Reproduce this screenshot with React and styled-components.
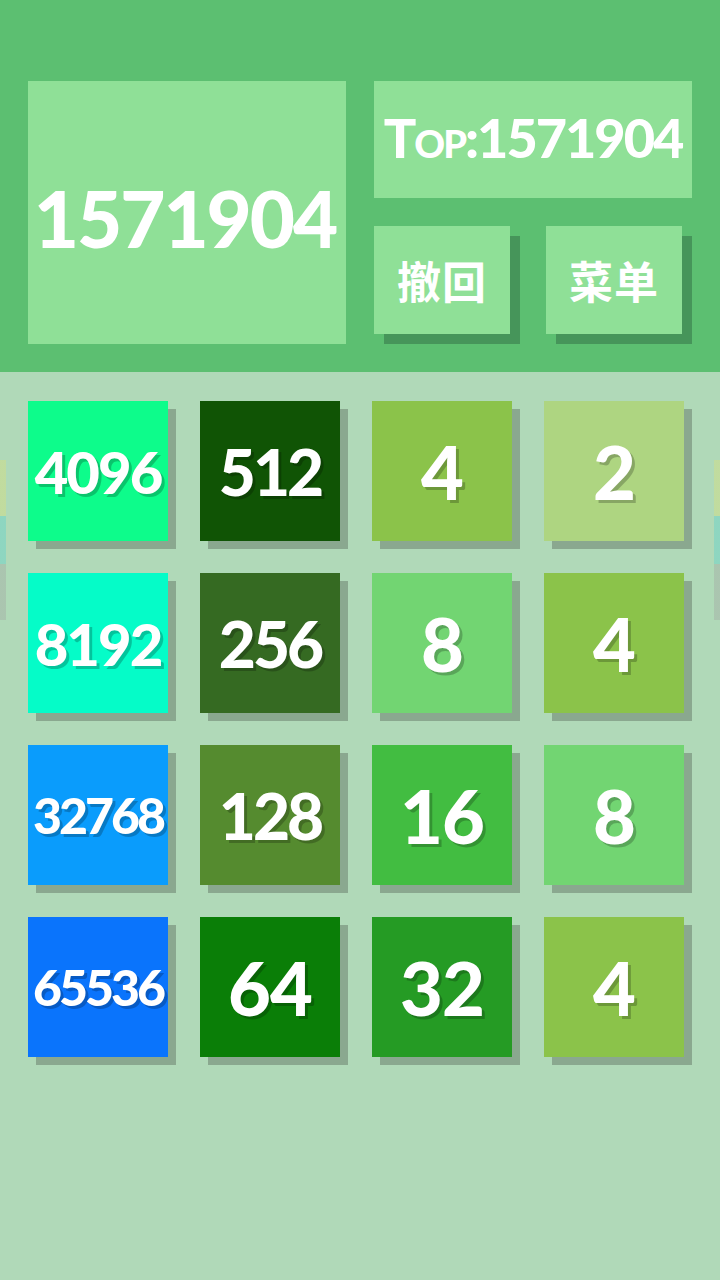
import React from 'react';
import styled, { createGlobalStyle } from 'styled-components';

const GlobalStyle = createGlobalStyle`
  html, body {
    margin: 0;
    padding: 0;
    background: #b0d9b8;
  }
  * {
    box-sizing: border-box;
  }
`;

const Page = styled.div`
  position: relative;
  width: 720px;
  min-height: 1280px;
  background: #b0d9b8;
  font-family: 'Lato', 'Noto Sans CJK SC', sans-serif;
  overflow: hidden;
`;

const Header = styled.div`
  display: flex;
  gap: 28px;
  height: 372px;
  padding: 81px 28px 28px;
  background: #5cbf71;
`;

const ScoreBox = styled.div`
  width: 318px;
  height: 263px;
  display: flex;
  align-items: center;
  justify-content: center;
  background: #8fe097;
  color: #fff;
  font-size: 78px;
  font-weight: 900;
  letter-spacing: -2px;
  padding-top: 10px;
  padding-right: 4px;
`;

const SideCol = styled.div`
  width: 318px;
  display: flex;
  flex-direction: column;
  gap: 28px;
`;

const TopBox = styled.div`
  height: 117px;
  display: flex;
  align-items: center;
  justify-content: center;
  background: #8fe097;
  color: #fff;
  font-size: 54px;
  font-weight: 900;
  font-variant: small-caps;
  letter-spacing: -2px;
  padding-bottom: 4px;
`;

const ButtonRow = styled.div`
  display: flex;
  gap: 36px;
`;

const MenuButton = styled.button`
  width: 136px;
  height: 108px;
  border: none;
  padding: 0;
  background: #8fe097;
  box-shadow: 10px 10px 0 #46955a;
  color: #fff;
  font-family: 'Noto Sans CJK SC', sans-serif;
  font-size: 44px;
  font-weight: 700;
  letter-spacing: 1px;
`;

const Board = styled.div`
  display: grid;
  grid-template-columns: repeat(4, 140px);
  grid-auto-rows: 140px;
  gap: 32px;
  padding: 29px 28px;
`;

const Tile = styled.div`
  display: flex;
  align-items: center;
  justify-content: center;
  background: ${(p) => p.$bg};
  box-shadow: 8px 8px 0 #8aa88f;
  color: #fff;
  font-size: ${(p) => p.$size}px;
  font-weight: 900;
  letter-spacing: ${(p) => p.$spacing}px;
  text-shadow: 3px 3px 0 rgba(0, 0, 0, 0.22);
`;

const EdgeStrip = styled.div`
  position: absolute;
  top: 460px;
  ${(p) => (p.$side === 'left' ? 'left: 0;' : 'right: 0;')}
  width: 6px;
  height: 160px;
  opacity: 0.35;
  background: linear-gradient(
    to bottom,
    #e0e070 0 35%,
    #4fd0d0 35% 65%,
    #a0a0a0 65% 100%
  );
`;

const tiles = [
  [4096, '#0dfc8b'], [512, '#105405'], [4, '#8bc34a'], [2, '#aed581'],
  [8192, '#05fcc8'], [256, '#356a22'], [8, '#72d572'], [4, '#8bc34a'],
  [32768, '#0a9cfc'], [128, '#558b2f'], [16, '#42bd41'], [8, '#72d572'],
  [65536, '#0a74fc'], [64, '#0a7e07'], [32, '#259b24'], [4, '#8bc34a'],
];

function sizeFor(n) {
  const len = String(n).length;
  if (len <= 2) return { size: 74, spacing: -1 };
  if (len === 3) return { size: 64, spacing: -3 };
  if (len === 4) return { size: 58, spacing: -2 };
  return { size: 50, spacing: -3 };
}

function App() {
  return (
    <Page>
      <GlobalStyle />
      <Header>
        <ScoreBox>1571904</ScoreBox>
        <SideCol>
          <TopBox>Top:1571904</TopBox>
          <ButtonRow>
            <MenuButton>撤回</MenuButton>
            <MenuButton>菜单</MenuButton>
          </ButtonRow>
        </SideCol>
      </Header>
      <Board>
        {tiles.map(([n, bg], i) => {
          const { size, spacing } = sizeFor(n);
          return (
            <Tile key={i} $bg={bg} $size={size} $spacing={spacing}>
              {n}
            </Tile>
          );
        })}
      </Board>
      <EdgeStrip $side="left" />
      <EdgeStrip $side="right" />
    </Page>
  );
}

export default App;
